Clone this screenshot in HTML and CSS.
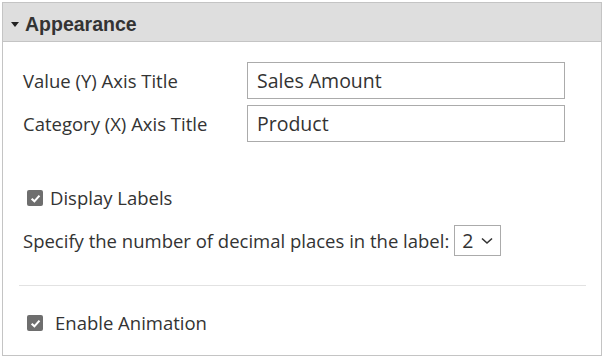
FILE: index.html
```html
<!DOCTYPE html>
<html lang="en">
<head>
    <meta charset="UTF-8">
    <title>Appearance</title>
    <link rel="stylesheet" href="styles.css">
</head>
<body>
    <div class="panel">
        <div class="panel-header">
            <span class="caret"></span>
            <span>Appearance</span>
        </div>
        <div class="panel-body">
            <div class="fields">
                <label class="field-label">Value (Y) Axis Title</label>
                <input class="field-input" type="text" value="Sales Amount">
                <label class="field-label">Category (X) Axis Title</label>
                <input class="field-input" type="text" value="Product">
            </div>

            <div class="check-row labels-row">
                <span class="check">
                    <svg width="11" height="11" viewBox="0 0 10 10"><path d="M1.5 5.2 L4 7.6 L8.6 2.4" fill="none" stroke="#fff" stroke-width="1.9"/></svg>
                </span>
                <span>Display Labels</span>
            </div>

            <div class="decimal-row">
                <span>Specify the number of decimal places in the label:</span>
                <span class="select">
                    <span>2</span>
                    <svg width="12" height="8" viewBox="0 0 12 8"><path d="M1 1.5 L6 6 L11 1.5" fill="none" stroke="#333" stroke-width="1.6"/></svg>
                </span>
            </div>

            <hr class="divider">

            <div class="check-row anim-row">
                <span class="check">
                    <svg width="11" height="11" viewBox="0 0 10 10"><path d="M1.5 5.2 L4 7.6 L8.6 2.4" fill="none" stroke="#fff" stroke-width="1.9"/></svg>
                </span>
                <span>Enable Animation</span>
            </div>
        </div>
    </div>
</body>
</html>
```

FILE: styles.css
```css
body {
    margin: 0;
    background: #fff;
    font-family: 'Open Sans', sans-serif;
    color: #333;
}

.panel {
    margin: 2px 0 0 2px;
    width: 598px;
    height: 352px;
    border: 1px solid #c4c4c4;
}

.panel-header {
    box-sizing: border-box;
    height: 39px;
    padding-top: 4px;
    background: #dedede;
    border-bottom: 1px solid #c4c4c4;
    display: flex;
    align-items: center;
    gap: 6px;
    padding-left: 8px;
    font-family: 'Liberation Sans', Arial, sans-serif;
    font-weight: bold;
    font-size: 19.5px;
    color: #333;
}

.caret {
    width: 0;
    height: 0;
    border-left: 4px solid transparent;
    border-right: 4px solid transparent;
    border-top: 5px solid #222;
    margin-top: 1px;
}

.panel-body {
    padding: 20px 16px 0 20px;
    font-size: 18.5px;
    line-height: 24px;
}

.fields {
    display: grid;
    grid-template-columns: 224px 318px;
    row-gap: 6px;
    align-items: center;
}

.field-label {
    white-space: nowrap;
}

.field-input {
    box-sizing: border-box;
    height: 37px;
    width: 318px;
    margin: 0;
    border: 1px solid #ababab;
    padding: 0 9px;
    font-family: 'Open Sans', sans-serif;
    font-size: 19.5px;
    color: #333;
    outline: none;
}

.check-row {
    display: flex;
    align-items: center;
    margin-left: 4px;
}

.check {
    width: 16px;
    height: 16px;
    background: #6e6e6e;
    border-radius: 2px;
    display: flex;
    align-items: center;
    justify-content: center;
    margin-right: 7px;
}

.labels-row {
    margin-top: 44px;
}

.decimal-row {
    display: flex;
    align-items: center;
    margin-top: 15px;
    white-space: nowrap;
}

.select {
    box-sizing: border-box;
    margin-left: 5px;
    height: 31px;
    width: 47px;
    border: 1px solid #ababab;
    display: flex;
    align-items: center;
    padding-left: 7px;
    gap: 8px;
    font-size: 19.5px;
}

.divider {
    border: none;
    border-top: 1px solid #e2e2e2;
    margin: 29px 0 0 -4px;
    width: 567px;
}

.anim-row {
    margin-top: 25px;
}

.anim-row .check {
    margin-right: 12px;
}
```
